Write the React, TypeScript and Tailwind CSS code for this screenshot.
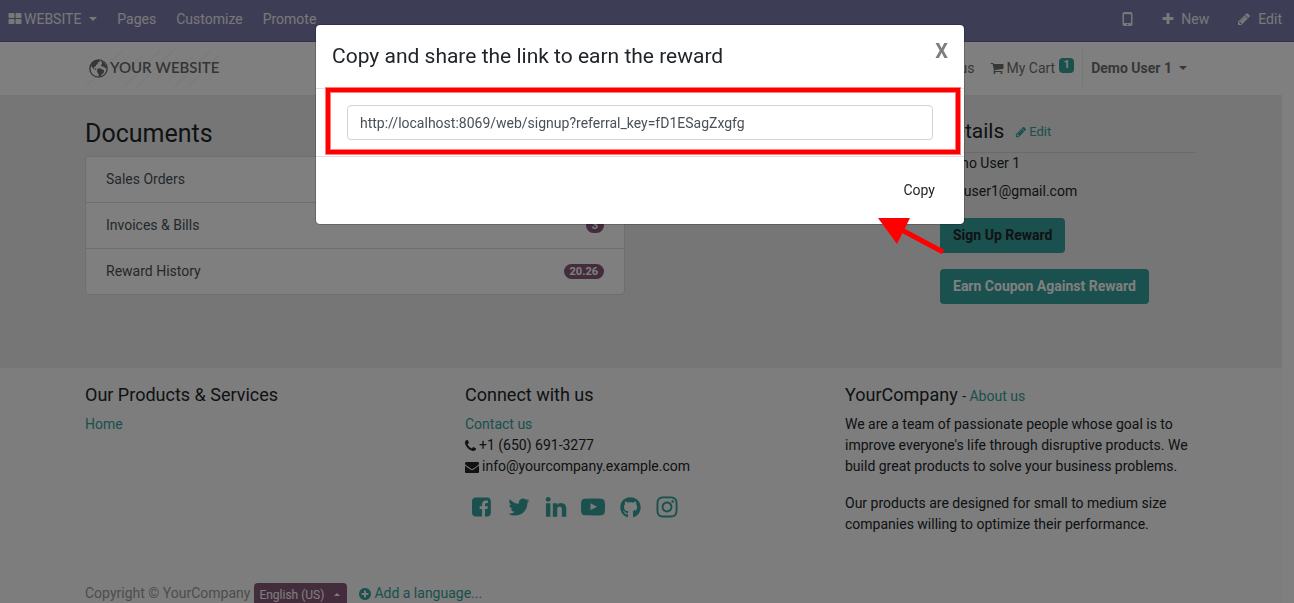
import { useState } from "react";
import type { ReactNode } from "react";
import { FaGithub, FaInstagram } from "react-icons/fa";

const ICONS = {
  thLarge:
    "M832 1024v384q0 52-38 90t-90 38h-512q-52 0-90-38t-38-90v-384q0-52 38-90t90-38h512q52 0 90 38t38 90zm0-768v384q0 52-38 90t-90 38h-512q-52 0-90-38t-38-90v-384q0-52 38-90t90-38h512q52 0 90 38t38 90zm896 768v384q0 52-38 90t-90 38h-512q-52 0-90-38t-38-90v-384q0-52 38-90t90-38h512q52 0 90 38t38 90zm0-768v384q0 52-38 90t-90 38h-512q-52 0-90-38t-38-90v-384q0-52 38-90t90-38h512q52 0 90 38t38 90z",
  plus: "M1600 736v192q0 40-28 68t-68 28h-416v416q0 40-28 68t-68 28h-192q-40 0-68-28t-28-68v-416h-416q-40 0-68-28t-28-68v-192q0-40 28-68t68-28h416v-416q0-40 28-68t68-28h192q40 0 68 28t28 68v416h416q40 0 68 28t28 68z",
  plusCircle:
    "M1344 960v-128q0-26-19-45t-45-19h-256v-256q0-26-19-45t-45-19h-128q-26 0-45 19t-19 45v256h-256q-26 0-45 19t-19 45v128q0 26 19 45t45 19h256v256q0 26 19 45t45 19h128q26 0 45-19t19-45v-256h256q26 0 45-19t19-45zm320-64q0 209-103 385.5t-279.5 279.5-385.5 103-385.5-103-279.5-279.5-103-385.5 103-385.5 279.5-279.5 385.5-103 385.5 103 279.5 279.5 103 385.5z",
  pencil:
    "M491 1536l91-91-235-235-91 91v107h128v128h107zm523-928q0-22-22-22-10 0-17 7l-542 542q-7 7-7 17 0 22 22 22 10 0 17-7l542-542q7-7 7-17zm-54-192l416 416-832 832h-416v-416zm683 96q0 53-37 90l-166 166-416-416 166-165q36-38 90-38 53 0 91 38l235 234q37 39 37 91z",
  cart: "M704 1536q0 52-38 90t-90 38-90-38-38-90 38-90 90-38 90 38 38 90zm896 0q0 52-38 90t-90 38-90-38-38-90 38-90 90-38 90 38 38 90zm128-1088v512q0 24-16.5 42.5t-40.5 21.5l-1044 122q13 60 13 70 0 16-24 64h920q26 0 45 19t19 45-19 45-45 19h-1024q-26 0-45-19t-19-45q0-11 8-31.5t16-36 21.5-40 15.5-29.5l-177-823h-204q-26 0-45-19t-19-45 19-45 45-19h256q16 0 28.5 6.5t19.5 15.5 13 24.5 8 26 5.5 29.5 4.5 26h1201q26 0 45 19t19 45z",
  envelope:
    "M1792 710v794q0 66-47 113t-113 47h-1472q-66 0-113-47t-47-113v-794q44 49 101 87 362 246 497 345 57 42 92.5 65.5t94.5 48 110 24.5h2q51 0 110-24.5t94.5-48 92.5-65.5q170-123 498-345 57-39 100-87zm0-294q0 79-49 151t-122 123q-376 261-468 325-10 7-42.5 31t-54 38.5-52 32.5-57.5 27-50 9h-2q-23 0-50-9t-57.5-27-52-32.5-54-38.5-42.5-31q-91-64-262-182.5t-205-142.5q-62-42-117-115.5t-55-136.5q0-78 41.5-130t118.5-52h1472q65 0 112.5 47t47.5 113z",
  phone:
    "M1600 1240q0 27-10 70.5t-21 68.5q-21 50-122 106-94 51-186 51-27 0-52.5-3.5t-57.5-12.5-47.5-14.5-55.5-20.5-49-18q-98-35-175-83-128-79-264.5-215.5t-215.5-264.5q-48-77-83-175-3-9-18-49t-20.5-55.5-14.5-47.5-12.5-57.5-3.5-52.5q0-92 51-186 56-101 106-122 25-11 68.5-21t70.5-10q14 0 21 3 18 6 53 76 11 19 30 54t35 63.5 31 53.5q3 4 17.5 25t21.5 35.5 7 28.5q0 20-28.5 50t-62 55-62 53-28.5 46q0 9 5 22.5t8.5 20.5 14 24 11.5 19q76 137 174 235t235 174q2 1 19 11.5t24 14 20.5 8.5 22.5 5q18 0 46-28.5t53-62 55-62 50-28.5q14 0 28.5 7t35.5 21.5 25 17.5q25 15 53.5 31t63.5 35 54 30q70 35 76 53 3 7 3 21z",
  facebook:
    "M1248 128q119 0 203.5 84.5t84.5 203.5v960q0 119-84.5 203.5t-203.5 84.5h-188v-595h199l30-232h-229v-148q0-56 23.5-84t91.5-28l122-1v-207q-63-9-178-9-136 0-217.5 80t-81.5 226v171h-200v232h200v595h-532q-119 0-203.5-84.5t-84.5-203.5v-960q0-119 84.5-203.5t203.5-84.5h960z",
  twitter:
    "M1684 408q-67 98-162 167 1 14 1 42 0 130-38 259.5t-115.5 248.5-184.5 210.5-258 146-323 54.5q-271 0-496-145 35 4 78 4 225 0 401-138-105-2-188-64.5t-114-159.5q33 5 61 5 43 0 85-11-112-23-185.5-111.5t-73.5-205.5v-4q68 38 146 41-66-44-105-115t-39-154q0-88 44-163 121 149 294.5 238.5t371.5 99.5q-8-38-8-74 0-134 94.5-228.5t228.5-94.5q140 0 236 102 109-21 205-78-37 115-142 178 93-10 186-50z",
  linkedin:
    "M477 625v991h-330v-991h330zm21-306q1 73-50.5 122t-135.5 49h-2q-82 0-132-49t-50-122q0-74 51.5-122.5t134.5-48.5 133 48.5 51 122.5zm1166 729v568h-329v-530q0-105-40.5-164.5t-126.5-59.5q-63 0-105.5 34.5t-63.5 85.5q-11 30-11 81v553h-329q2-399 2-647t-1-296l-1-48h329v144h-2q20-32 41-56t56.5-52 87-43.5 114.5-15.5q171 0 275 113.5t104 332.5z",
  youtube:
    "M711 1128l484-250-484-253v503zm185-862q168 0 324.5 4.5t229.5 9.5l73 4q1 0 17 1.5t23 3 23.5 4.5 28.5 8 28 13 31 19.5 29 26.5q6 6 15.5 18.5t29 58.5 26.5 101q8 64 12.5 136.5t5.5 113.5v176q1 145-18 290-7 55-25 99.5t-32 61.5l-14 17q-14 15-29 26.5t-31 19-28 12.5-28.5 8-24 4.5-23 3-16.5 1.5q-251 19-627 19-207-2-359.5-6.5t-200.5-7.5l-49-4-36-4q-36-5-54.5-10t-51-21-56.5-41q-6-6-15.5-18.5t-29-58.5-26.5-101q-8-64-12.5-136.5t-5.5-113.5v-176q-1-145 18-290 7-55 25-99.5t32-61.5l14-17q14-15 29-26.5t31-19.5 28-13 28.5-8 23.5-4.5 23-3 17-1.5q251-18 627-18z",
};

const DOCUMENTS = [
  { name: "Sales Orders", count: "2" },
  { name: "Invoices & Bills", count: "3" },
  { name: "Reward History", count: "20.26" },
];

const SOCIALS = [
  { name: "Facebook", icon: <Icon name="facebook" className="ml-0.5 size-6" /> },
  { name: "Twitter", icon: <Icon name="twitter" className="size-6" /> },
  { name: "LinkedIn", icon: <Icon name="linkedin" className="size-6" /> },
  { name: "YouTube", icon: <Icon name="youtube" className="size-6" /> },
  { name: "GitHub", icon: <FaGithub className="size-[21px]" /> },
  { name: "Instagram", icon: <FaInstagram className="size-6" /> },
];

function Icon({
  name,
  className = "size-3.5",
  viewBox = "0 0 1792 1792",
}: {
  name: keyof typeof ICONS;
  className?: string;
  viewBox?: string;
}) {
  return (
    <svg viewBox={viewBox} fill="currentColor" className={className} aria-hidden="true">
      <path d={ICONS[name]} />
    </svg>
  );
}

function Caret({ up = false }: { up?: boolean }) {
  return up ? (
    <svg viewBox="0 0 6 3" fill="currentColor" className="h-[3px] w-1.5" aria-hidden="true">
      <path d="M0 3h6L3 0z" />
    </svg>
  ) : (
    <svg viewBox="0 0 8 4" fill="currentColor" className="h-1 w-2" aria-hidden="true">
      <path d="M0 0h8L4 4z" />
    </svg>
  );
}

function Container({ children, className = "" }: { children: ReactNode; className?: string }) {
  return <div className={`mx-auto max-w-[1140px] px-[15px] ${className}`}>{children}</div>;
}

function EditorBar() {
  return (
    <nav className="flex h-[42px] shrink-0 items-center justify-between border-b border-[#62619a] bg-[#7c7bad] pb-1 pl-2 pr-3 text-[#f0f0f0]">
      <div className="flex items-center gap-5">
        <button className="flex items-center gap-0.5">
          <Icon name="thLarge" />
          <span>WEBSITE</span>
          <span className="ml-1.5">
            <Caret />
          </span>
        </button>
        <button>Pages</button>
        <button>Customize</button>
        <button>Promote</button>
      </div>
      <div className="flex items-center">
        <button aria-label="Mobile preview" className="mr-7">
          <svg viewBox="0 0 11 14" className="h-3.5 w-[11px]" aria-hidden="true">
            <path
              fillRule="evenodd"
              fill="currentColor"
              d="M2.2 0h6.6A1.7 1.7 0 0 1 10.5 1.7v10.6A1.7 1.7 0 0 1 8.800 14H2.200A1.700 1.700 0 0 1 .5 12.300V1.700A1.700 1.700 0 0 1 2.200 0zM2 2.200v8.800h7V2.200zM5.500 11.700a.8.8 0 1 0 0 1.600.8.8 0 0 0 0-1.600z"
            />
          </svg>
        </button>
        <button className="mr-7 flex items-center gap-1.5">
          <Icon name="plus" />
          New
        </button>
        <button className="flex items-center gap-[7px]">
          <Icon name="pencil" />
          Edit
        </button>
      </div>
    </nav>
  );
}

function Logo() {
  return (
    <a
      href="#"
      className="flex h-[37px] items-center gap-0.5 bg-[repeating-linear-gradient(135deg,transparent_0,transparent_8px,#f7f7f7_8px,#f7f7f7_9px)] pl-1 font-[Lato,sans-serif] text-[15px] font-semibold text-[#6a6a6a]"
    >
      <svg viewBox="0 0 18 18" className="size-[19px]" aria-hidden="true">
        <circle cx="9" cy="9" r="8.200" fill="none" stroke="currentColor" strokeWidth="1.300" />
        <path
          fill="currentColor"
          d="M2 5.500C3 3.500 5 1.500 8 1l2.500.6-1 1.400-1.700.2.700 1.300-1.700 1.200-.6 1.500-1.700.4.200 1.300 1.600.2.900 1.400-1.200-.2-2-1.400L2.600 7.500zM8 9.200l2.200-.5 2.200 1.100 2 1.200-.6 2.200-1.700 1.300-1.200 2.200-1.500.2-.3-2.800-1.500-2zM11.500 2l2.500 1.400 1.800 2.600.7 3-1.200-.4-1.200-1.600-1.800.4-1-1.600 1.200-1.200z"
        />
      </svg>
      YOUR WEBSITE
    </a>
  );
}

function SiteHeader() {
  return (
    <header className="bg-white pr-0.5">
      <Container className="flex h-[53px] items-center justify-between pb-px">
        <Logo />
        <nav className="flex items-center pr-2 text-[#6f6f6f]">
          <a href="#" className="mr-4">Contact us</a>
          <a href="#" className="mr-2 flex items-center gap-0.5">
            <Icon name="cart" />
            My Cart
            <span className="ml-0.5 mb-1.5 flex h-[15px] w-[15px] items-center justify-center rounded bg-[#35a09b] text-[11px] font-bold text-white">
              1
            </span>
          </a>
          <button className="flex h-[37px] items-center gap-[7px] border-l border-[#ededed] pl-2 font-bold">
            Demo User 1
            <Caret />
          </button>
        </nav>
      </Container>
    </header>
  );
}

function Portal() {
  return (
    <main className="bg-[#ececec] pr-0.5">
      <Container className="flex h-[273px] justify-between pt-6">
        <section className="w-[540px]">
          <h3 className="mb-2 text-[25px] leading-[29px] text-[#212529]">Documents</h3>
          <ul className="divide-y divide-[#dcdcdc] rounded border border-[#dcdcdc] bg-white">
            {DOCUMENTS.map((doc) => (
              <li key={doc.name}>
                <a href="#" className="flex h-[45px] items-center justify-between px-5 text-[#495057]">
                  <span className="pb-0.5">{doc.name}</span>
                  <span className="rounded-full bg-[#875a7b] px-1.5 text-[11px] leading-[15px] font-bold text-white">
                    {doc.count}
                  </span>
                </a>
              </li>
            ))}
          </ul>
        </section>
        <aside className="w-[255px]">
          <div className="flex h-[34px] items-start gap-[11px] border-b border-[#d5d5d5]">
            <h4 className="text-[21px] leading-6 text-[#212529]">Details</h4>
            <a href="#" className="flex items-center gap-0.5 pt-[3px] text-[13px] leading-5 text-[#35a09b]">
              <Icon name="pencil" className="size-3" />
              Edit
            </a>
          </div>
          <p className="leading-[21px] text-[#212529]">Demo User 1</p>
          <p className="mt-[7px] mb-4 leading-[21px] text-[#212529]">testuser1@gmail.com</p>
          <div className="flex flex-col items-start gap-4">
            <button className="h-[35px] rounded bg-[#35a09b] px-[13px] pb-0.5 font-bold text-[#212529]">
              Sign Up Reward
            </button>
            <button className="h-[35px] rounded bg-[#35a09b] px-[13px] pb-0.5 font-bold text-white">
              Earn Coupon Against Reward
            </button>
          </div>
        </aside>
      </Container>
    </main>
  );
}

function SiteFooter() {
  return (
    <footer className="grow bg-[#fafafa] pr-0.5 leading-[21px] text-[#212529]">
      <Container className="grid h-[215px] grid-cols-3 gap-[30px] pt-4">
        <section>
          <h5 className="mb-2 text-lg leading-[22px]">Our Products &amp; Services</h5>
          <a href="#" className="text-[#35a09b]">Home</a>
        </section>
        <section>
          <h5 className="mb-2 text-lg leading-[22px]">Connect with us</h5>
          <a href="#" className="text-[#35a09b]">Contact us</a>
          <p className="flex items-center gap-[3px]">
            <Icon name="phone" viewBox="192 0 1408 1792" className="h-3.5 w-[11px]" />
            +1 (650) 691-3277
          </p>
          <p className="flex items-center gap-[3px]">
            <Icon name="envelope" />
            info@yourcompany.example.com
          </p>
          <div className="mt-[18px] flex items-center gap-[13px] pl-[5px] text-[#35a09b]">
            {SOCIALS.map((social) => (
              <a key={social.name} href="#" aria-label={social.name} className="flex size-6 items-center justify-center">
                {social.icon}
              </a>
            ))}
          </div>
        </section>
        <section>
          <h5 className="mb-2 text-lg leading-[22px]">
            YourCompany{" "}
            <span className="text-sm leading-none">
              - <a href="#" className="text-[#35a09b]">About us</a>
            </span>
          </h5>
          <p className="mb-4">
            We are a team of passionate people whose goal is to improve everyone's life through disruptive products. We
            build great products to solve your business problems.
          </p>
          <p>Our products are designed for small to medium size companies willing to optimize their performance.</p>
        </section>
      </Container>
      <Container className="flex items-start">
        <span className="mr-1 text-[#9b9b9b]">Copyright © YourCompany</span>
        <button className="mr-[11px] flex h-[23px] items-center gap-2.5 rounded-sm bg-[#875a7b] pr-[7px] pl-[5px] text-xs text-white">
          English (US)
          <Caret up />
        </button>
        <a href="#" className="flex items-center gap-0.5 text-[#35a09b]">
          <Icon name="plusCircle" />
          Add a language...
        </a>
      </Container>
    </footer>
  );
}

function ShareDialog({ onClose }: { onClose: () => void }) {
  const [link, setLink] = useState("http://localhost:8069/web/signup?referral_key=fD1ESagZxgfg");

  return (
    <div className="fixed inset-0 flex items-start justify-center bg-black/50 pt-6 pr-3.5">
      <div
        role="dialog"
        aria-labelledby="share-title"
        className="relative w-[650px] rounded-[5px] border border-black/20 bg-white bg-clip-padding text-[#212529]"
      >
        <div className="flex items-start justify-between border-b border-[#dee2e6] p-4 pb-[17px]">
          <h4 id="share-title" className="text-[21px] leading-[30px]">Copy and share the link to earn the reward</h4>
          <button onClick={onClose} aria-label="Close" className="text-xl leading-5 font-bold text-[#7f7f7f]">
            X
          </button>
        </div>
        <div className="border-b border-[#dee2e6] px-[31px] py-4">
          <input
            aria-label="Referral link"
            value={link}
            onChange={(e) => setLink(e.target.value)}
            className="block h-[35px] w-full rounded border border-[#ced4da] px-3 text-[#495057] outline-none"
          />
        </div>
        <div className="flex justify-end p-4">
          <button onClick={() => navigator.clipboard?.writeText(link)} className="h-[35px] px-[13px] pb-0.5">
            Copy
          </button>
        </div>

        {/* Highlight frame and arrow over the dialog */}
        <div className="pointer-events-none absolute top-[63px] right-1 left-2.5 h-[66px] border-4 border-[#ff0000] shadow-[0_0_0_1px_#ff000080,inset_0_0_0_1px_#ff000080]" />
        <svg
          viewBox="0 0 68 36"
          className="pointer-events-none absolute right-[18px] -bottom-[30px] h-9 w-[68px]"
          aria-hidden="true"
        >
          <path d="M0 0h32L19 26z" fill="#ff0000" />
          <path d="M20 10L65 34" stroke="#ff0000" strokeWidth="5" />
        </svg>
      </div>
    </div>
  );
}

export default function App() {
  const [open, setOpen] = useState(true);

  return (
    <div className="flex h-screen flex-col overflow-hidden bg-white font-[Roboto,sans-serif] text-sm">
      <EditorBar />
      <div className="flex min-h-0 grow">
        <div className="flex grow flex-col overflow-hidden">
          <SiteHeader />
          <Portal />
          <SiteFooter />
        </div>
        {/* Scrollbar gutter */}
        <div className="w-3 shrink-0 bg-white" />
      </div>
      {open && <ShareDialog onClose={() => setOpen(false)} />}
    </div>
  );
}
